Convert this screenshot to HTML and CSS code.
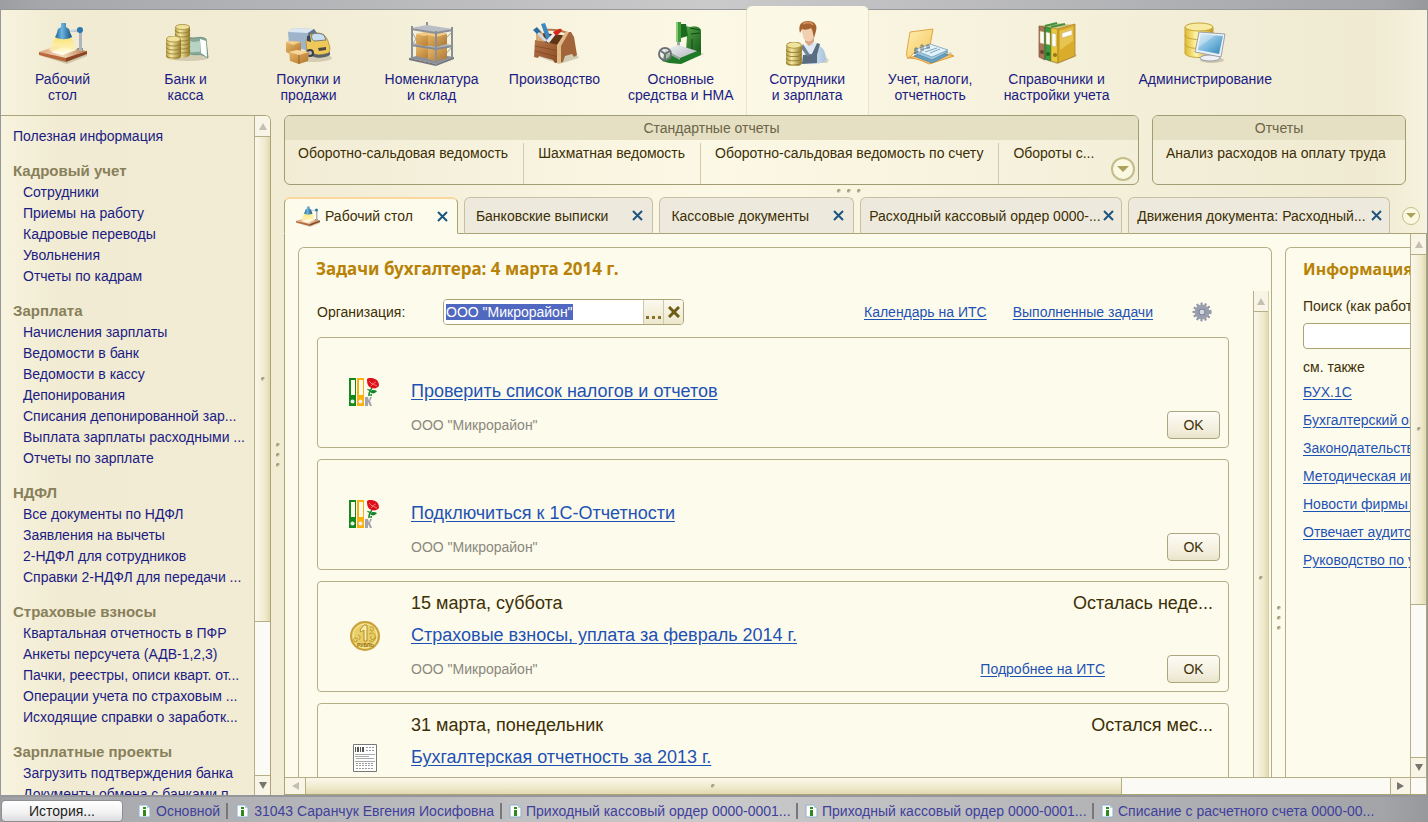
FILE: index.html
```html
<!DOCTYPE html>
<html lang="ru">
<head>
    <meta charset="utf-8">
    <title>Рабочий стол</title>
    <meta name="viewport" content="width=device-width, initial-scale=1">
    <link rel="stylesheet" href="styles.css">
</head>
<body>
    <svg class="defs" width="0" height="0">
        <defs>
            <linearGradient id="gold"><stop offset="0" stop-color="#b39b45"/><stop offset=".35" stop-color="#f6e9a0"/><stop offset="1" stop-color="#937a2a"/></linearGradient>
            <linearGradient id="blue"><stop offset="0" stop-color="#1a5f97"/><stop offset=".4" stop-color="#6db5de"/><stop offset="1" stop-color="#16507f"/></linearGradient>
            <linearGradient id="light" x2="0" y2="1"><stop offset="0" stop-color="#ffdf4a"/><stop offset="1" stop-color="#fffbd9"/></linearGradient>
            <linearGradient id="wood" y2="1"><stop offset="0" stop-color="#b5774c"/><stop offset="1" stop-color="#8a4a24"/></linearGradient>
            <linearGradient id="desk"><stop offset="0" stop-color="#dba27a"/><stop offset=".5" stop-color="#f4dcb8"/><stop offset="1" stop-color="#b9744a"/></linearGradient>
            <linearGradient id="box" y2="1"><stop offset="0" stop-color="#eabb6c"/><stop offset="1" stop-color="#b0742a"/></linearGradient>
            <linearGradient id="green" y2="1"><stop offset="0" stop-color="#5cb04b"/><stop offset="1" stop-color="#14551a"/></linearGradient>
            <linearGradient id="steel" y2="1"><stop offset="0" stop-color="#f4f6f8"/><stop offset="1" stop-color="#b0b4ba"/></linearGradient>
            <linearGradient id="screen" y2="1"><stop offset="0" stop-color="#c9e6f5"/><stop offset=".5" stop-color="#7bb9de"/><stop offset="1" stop-color="#2f86b8"/></linearGradient>
            <linearGradient id="cyl"><stop offset="0" stop-color="#e0b92c"/><stop offset=".4" stop-color="#fff6a8"/><stop offset="1" stop-color="#c2961c"/></linearGradient>
            <linearGradient id="folder" y2="1"><stop offset="0" stop-color="#fff0b4"/><stop offset="1" stop-color="#f3c458"/></linearGradient>
            <linearGradient id="shirt"><stop offset="0" stop-color="#f4f9ff"/><stop offset="1" stop-color="#a9c4dd"/></linearGradient>
        </defs>
        <symbol id="i-lamp" viewBox="0 0 48 46">
            <path d="M3 36l25 8 20-8v-4z" fill="#8a8060" opacity=".35"/>
            <path d="M38 28h6v3h-6z" fill="#8d9299"/>
            <path d="M0 32l17-6 31 5-21 7z" fill="url(#desk)"/>
            <path d="M0 32l27 6v4L0 35z" fill="#b9683c"/>
            <path d="M27 38l21-7v3l-21 8z" fill="#8b4522"/>
            <path d="M12 32l13-5 12 3-14 5z" fill="#fff"/>
            <path d="M17 16h15l5 14-15 4-12-4z" fill="url(#light)" opacity=".75"/>
            <path d="M27 9h14v3H27z" fill="url(#steel)"/>
            <path d="M40 11h3v20h-3z" fill="#aeb4bc"/>
            <circle cx="41" cy="10" r="3" fill="#2c77ab"/>
            <path d="M22 3h5v4l3 2c1 4 2 5 3 8-5 3-12 3-17 0 2-3 2-5 3-8l3-2z" fill="url(#blue)"/>
        </symbol>
        <symbol id="i-coins" viewBox="0 0 16 24">
            <path d="M0 3v17c0 5 15 5 15 0V3z" fill="url(#gold)"/>
            <path d="M0 7c0 4 15 4 15 0M0 11c0 4 15 4 15 0M0 15c0 4 15 4 15 0M0 19c0 4 15 4 15 0" fill="none" stroke="#8d7528" stroke-opacity=".8"/>
            <ellipse cx="7.500" cy="3" rx="7" ry="3" fill="#efe3a0" stroke="#b39a45"/>
        </symbol>
        <symbol id="i-close" viewBox="0 0 11 11"><path d="M1 1l9 9M10 1l-9 9" fill="none" stroke="#1c567f" stroke-width="2"/></symbol>
        <symbol id="i-binders" viewBox="0 0 31 29">
            <path d="M0 0h7v28H0z" fill="#128a1e"/><path d="M2 2h4v15H2z" fill="#fdfbec"/><circle cx="3.500" cy="23.500" r="2" fill="#eee"/>
            <path d="M8 0h7v28H8z" fill="#fbb00c"/><path d="M10 2h4v15h-4z" fill="#fdfbec"/><circle cx="11.500" cy="23.500" r="2" fill="#eee"/>
            <path d="M16 19h3l1 4 1-4h2l-2 4 2 5h-2l-2-4v4h-3z" fill="#a2a2aa"/>
            <path d="M23 9c0 3-4 4-3 9" fill="none" stroke="#12842a" stroke-width="1.500"/>
            <path d="M21 14c2-3 5-2 7-1-2 3-5 3-7 1zM22 14c-3-2-4-2-4-3 3 0 4 1 4 3zM19 17l4-1v2z" fill="#12842a"/>
            <path d="M18 1c3-2 6-1 8 0 3 1 4 4 4 7-2 2-4 3-7 2-4-1-5-4-5-9z" fill="#e0101a"/>
            <path d="M20 3l3 3 4-2M22 8l2-2 4 2" fill="none" stroke="#ff9d9d" stroke-width=".7"/>
        </symbol>
        <symbol id="i-info" viewBox="0 0 13 14"><path d="M1 1h8l3 3v9H1z" fill="#fdfdfd" stroke="#8fb0c9"/><path d="M9 1v3h3z" fill="#b9d3e6"/><path d="M5 3h3v2H5zM5 6h3v6H5z" fill="#2f8a1c"/></symbol>
    </svg>

    <div class="window">
        <nav class="sections">
            <a href="#" class="section">
                <svg width="48" height="46"><use href="#i-lamp"/></svg>
                <span>Рабочий<br>стол</span>
            </a>
            <a href="#" class="section">
                <svg width="48" height="46" viewBox="0 0 48 46">
                    <ellipse cx="26" cy="38" rx="20" ry="3" fill="#8a8060" opacity=".3"/>
                    <path d="M26 17c8 3 11-2 18 2l2 19c-8-6-12-1-20-5z" fill="#86aa95" stroke="#6f9282"/>
                    <path d="M28 21c5 2 7 0 10 0v11c-3-1-6 1-10 0z" fill="#b7d3c3"/>
                    <path d="M38 19l6 2 1 16-6-4z" fill="#fff"/>
                    <path d="M13 7v27c0 5 15 5 15 0V7z" fill="url(#gold)"/>
                    <path d="M13 10c0 4 15 4 15 0M13 14c0 4 15 4 15 0M13 18c0 4 15 4 15 0M13 22c0 4 15 4 15 0M13 26c0 4 15 4 15 0M13 30c0 4 15 4 15 0" fill="none" stroke="#8d7528" stroke-opacity=".8"/>
                    <ellipse cx="20.500" cy="7" rx="7" ry="2.500" fill="#efe3a0" stroke="#b39a45"/>
                    <use href="#i-coins" x="4" y="16" width="16" height="24"/>
                </svg>
                <span>Банк и<br>касса</span>
            </a>
            <a href="#" class="section">
                <svg width="48" height="46" viewBox="0 0 48 46">
                    <ellipse cx="28" cy="38" rx="19" ry="4" fill="#8a8060" opacity=".3"/>
                    <path d="M3 12l5-4 21 1 3 4-9 18-19-6z" fill="#9db4ca"/>
                    <path d="M3 12l5-4 21 1-6 4z" fill="#dde7f1"/><path d="M23 13l6-4 3 4-7 17z" fill="#60758c"/>
                    <path d="M21 21c2-6 5-8 11-8 6 0 9 3 11 8l2 7-1 5-10 2-12-3z" fill="#efc85a" stroke="#a8842c" stroke-width=".7"/>
                    <path d="M27 14c4-1 9-1 12 1l2 5-11 1c-3 0-4-4-3-7z" fill="#c8dff2" stroke="#4c5b68" stroke-width=".7"/>
                    <path d="M22 16l3-1 1 7-4-1z" fill="#34495b"/>
                    <path d="M27 33c5 3 13 2 18-1v3c-5 3-13 4-18 1z" fill="#5b6168"/>
                    <path d="M33 28l8-1v3l-7 1z" fill="#4d4a40"/>
                    <circle cx="25" cy="33" r="4" fill="#3b3f44"/><circle cx="25" cy="33" r="2" fill="#b9bec4"/>
                    <path d="M1 22l5-1 10 1v11l-9 2-6-3z" fill="url(#box)"/><path d="M1 22l5-1 10 1-8 3z" fill="#f3cf90"/>
                    <path d="M4 32l8-2 12 2-1 9-9 3-9-3z" fill="url(#box)"/><path d="M4 32l8-2 12 2-10 3z" fill="#f5d69d"/><path d="M14 35v9" stroke="#99621f"/>
                </svg>
                <span>Покупки и<br>продажи</span>
            </a>
            <a href="#" class="section">
                <svg width="48" height="46" viewBox="0 0 48 46">
                    <path d="M1 38l18-5 27 4-18 7z" fill="#8c9096"/><path d="M1 38l27 6v2L1 40zM28 44l18-7v2l-18 7z" fill="#73777d"/>
                    <path d="M18 2h2v33h-2z" fill="#8b9097"/>
                    <path d="M8 27l10-2 7 2v10l-9 1-8-2z" fill="url(#box)"/><path d="M20 29l11-3 8 2v10l-11 3-8-2z" fill="url(#box)"/>
                    <path d="M3 24l16-3 26 4-17 4z" fill="#b0b4ba"/><path d="M3 24l25 4v2L3 26zM28 28l17-3v2l-17 3z" fill="#858a91"/>
                    <path d="M8 14l10-2 7 2v11l-9 1-8-2z" fill="url(#box)"/><path d="M20 15l11-3 8 2v10l-11 3-8-2z" fill="url(#box)"/>
                    <path d="M8 14l10-2 7 2-9 2zM20 15l11-3 8 2-11 3z" fill="#f3cb85"/>
                    <path d="M3 8l16-3 26 4-17 4z" fill="#b9bec6"/><path d="M3 8l25 4v2L3 10zM28 12l17-3v2l-17 3z" fill="#8b9097"/>
                    <path d="M4 12l4 7-4 6M30 27l13-14M30 43l13-15" fill="none" stroke="#8b9097" stroke-width=".8"/>
                    <path d="M3 6h2v33H3zM27 11h2v34h-2zM43 7h2v31h-2z" fill="#8b9097"/>
                </svg>
                <span>Номенклатура<br>и склад</span>
            </a>
            <a href="#" class="section">
                <svg width="48" height="46" viewBox="0 0 48 46">
                    <path d="M6 36l22 8 20-6-3-5z" fill="#8a8060" opacity=".35"/>
                    <path d="M13 9c9-1 17 0 24 3v2c-8-3-16-4-24-3z" fill="#b87b49"/>
                    <path d="M4 22l7-9 20 2 7 3-9 10z" fill="#5f3518"/>
                    <path d="M5 21V11l3-2 4 4 1 9z" fill="#d9ab78"/>
                    <path d="M10 4l4-1 6 16-4 2z" fill="#3b88c2"/><path d="M2 10l4-3 4 5-3 3z" fill="#2a6c9d"/><path d="M6 14l2-2 8 8-2 2z" fill="#d3dbe2"/><path d="M15 21l8-9 2 2-7 9z" fill="#e8ecef"/>
                    <path d="M22 12l6-3c2-1 4 1 2 3l-5 4z" fill="#d92618"/>
                    <path d="M4 20l24 5v17l-4 1-2-3-14-4-1 2-4-1z" fill="url(#wood)"/>
                    <path d="M4 26l24 5M4 31l24 6" stroke="#7c4420" stroke-width=".7"/>
                    <path d="M28 25l8-13h4l3 5 3 18-3 2-2-3-7 2-2 6-4 1z" fill="#a2653a"/>
                    <path d="M26 25l9-14 3 1-8 14v17h-4z" fill="#e2b989"/>
                </svg>
                <span>Производство</span>
            </a>
            <a href="#" class="section">
                <svg width="48" height="46" viewBox="0 0 48 46">
                    <path d="M12 42l10 2 25-10-4-2z" fill="#8a8060" opacity=".3"/>
                    <path d="M25 5l8 2c5-2 10 0 11 3v23l-8 3-7-5 1-15-5-2z" fill="url(#green)"/>
                    <path d="M33 8l10 2M34 14l9-1M35 19v14" stroke="#0f4a16" fill="none"/>
                    <path d="M19 2h5v20h-5z" fill="#3f9a38"/><path d="M19 2h2v20h-2z" fill="#8acb75"/><path d="M24 4h5l2 12-7 2z" fill="#1a6a20"/>
                    <path d="M20 22h3v6h-3z" fill="#a6a6a6"/>
                    <path d="M8 31l12-5 24 6v3l-20 9-12-1-7-2z" fill="#1e7a26"/>
                    <path d="M8 30l13-5 19 6-17 7z" fill="url(#steel)"/><path d="M8 30l15 8v2L8 32z" fill="#9da3a8"/>
                    <circle cx="8" cy="34" r="6" fill="#eceeed" fill-opacity=".6" stroke="#6d7377" stroke-width="2"/>
                    <path d="M8 34l-4-3M8 34l5-3M8 34v6" stroke="#6d7377" stroke-width="2"/>
                </svg>
                <span>Основные<br>средства и НМА</span>
            </a>
            <a href="#" class="section active">
                <svg width="48" height="46" viewBox="0 0 48 46">
                    <path d="M17 43h27l2-3-4-4z" fill="#8a8060" opacity=".3"/>
                    <path d="M17 43c-1-11 1-18 10-20 9 1 16 4 16 18-7 4-19 4-26 2z" fill="url(#shirt)"/>
                    <path d="M24 22l4 5 5-5 1 5-6 7-5-7z" fill="#dfeaf5"/>
                    <path d="M34 23l3 1-3 11v8l-15 1 1-9 9-1z" fill="#5a6d80"/><path d="M20 24l7 11-3 1-6-8z" fill="#6f8090"/>
                    <path d="M22 17h9v5l-5 4-4-4z" fill="#dca684"/>
                    <path d="M18 7c3-4 12-4 14 0l-1 9c-1 7-9 7-11 1z" fill="#f3cfb2"/>
                    <path d="M17 13c-2-8 1-12 8-12 6 0 10 4 8 10l-2 7c-1-4-1-7-3-10-3 2-7 2-9 1z" fill="#a4622e"/>
                    <path d="M20 4c3-2 8-2 10 1" fill="none" stroke="#cf9059" stroke-width="2"/>
                    <use href="#i-coins" x="3" y="22" width="17" height="25"/>
                </svg>
                <span>Сотрудники<br>и зарплата</span>
            </a>
            <a href="#" class="section">
                <svg width="48" height="46" viewBox="0 0 48 46">
                    <path d="M20 43l27-8-2-3z" fill="#8a8060" opacity=".35"/>
                    <path d="M1 38c9 0 14 2 22 6l25-8-16-4z" fill="#f9c777" stroke="#e09c35"/>
                    <path d="M4 12l23-3-4 22-15 2-4 4c-3 2-4-1-3-7z" fill="url(#folder)" stroke="#e0a446"/>
                    <path d="M8 36l16-6 18 5-16 8z" fill="#6ba2c4" stroke="#427b9e" stroke-width=".7"/>
                    <path d="M8 33l16-6 18 5-16 8z" fill="#9ec8df" stroke="#427b9e" stroke-width=".7"/>
                    <path d="M8 30l16-6 18 6-16 7z" fill="#e5f1f8" stroke="#6398b7" stroke-width=".7"/>
                    <path d="M15 30l9-3M19 32l12-4M24 33l10-4" stroke="#7ba9c4"/>
                    <path d="M9 34v-6h2v5M15 32v-7h2v6M21 29v-4h2v4" fill="none" stroke="#5f6468" stroke-width=".8"/>
                </svg>
                <span>Учет, налоги,<br>отчетность</span>
            </a>
            <a href="#" class="section">
                <svg width="48" height="46" viewBox="0 0 48 46">
                    <path d="M12 40l12 4 20-8-3-4z" fill="#8a8060" opacity=".4"/>
                    <path d="M6 6l16-3 20 2-18 4z" fill="#d9c685"/>
                    <path d="M6 6l6 1v33l-6-3z" fill="#a87454" stroke="#805034" stroke-width=".7"/><path d="M12 7l6 1v33l-6-2z" fill="#3c9a40" stroke="#1d6d25" stroke-width=".7"/>
                    <path d="M12 6l12-3M18 7l14-3" stroke="#419144" stroke-width="2"/>
                    <path d="M18 8l7 1v34l-7-2z" fill="#e9c63c" stroke="#a8861f" stroke-width=".7"/>
                    <path d="M25 9l17-5v32l-17 7z" fill="#d9ac2c" stroke="#a1791b" stroke-width=".7"/><path d="M27 11l13-4v14l-13 9z" fill="#f0d268" opacity=".6"/>
                    <path d="M7 11l4 1v12l-4-1zM13 12l4 1v12l-4-1zM19 13l4 1v13l-4-1zM29 13l10-3v5l-10 3z" fill="#fffef5" stroke="#b8a773" stroke-width=".5"/>
                    <circle cx="9" cy="32" r="2" fill="#6a4630"/><circle cx="15" cy="34" r="2" fill="#1c641f"/><circle cx="22" cy="35" r="2" fill="#937819"/>
                </svg>
                <span>Справочники и<br>настройки учета</span>
            </a>
            <a href="#" class="section">
                <svg width="48" height="46" viewBox="0 0 48 46">
                    <ellipse cx="31" cy="40" rx="12" ry="3" fill="#8a8060" opacity=".35"/>
                    <path d="M4 7v26c0 6 28 6 28 0V7z" fill="url(#cyl)" stroke="#c7a538"/>
                    <path d="M4 15c0 6 28 6 28 0M4 24c0 6 28 6 28 0" fill="none" stroke="#c7a538"/>
                    <ellipse cx="18" cy="7" rx="14" ry="4" fill="#f8eaa0" stroke="#c7a538"/>
                    <path d="M26 33l6 1v4l-7-1z" fill="#9fa7b0"/><ellipse cx="29" cy="38" rx="10" ry="3" fill="#eef0f3" stroke="#9aa0a8"/>
                    <path d="M18 12l26 2-4 23-26-5z" fill="#edf0f4" stroke="#9aa2ac"/>
                    <path d="M20 14l22 2-4 18-21-4z" fill="url(#screen)"/><path d="M20 14l15 1-17 12z" fill="#fff" opacity=".3"/>
                </svg>
                <span>Администрирование</span>
            </a>
        </nav>

        <div class="workspace">
            <aside class="sidebar">
                <div class="nav">
                    <a href="#" class="nav-main">Полезная информация</a>
                    <h2>Кадровый учет</h2>
                    <a href="#">Сотрудники</a>
                    <a href="#">Приемы на работу</a>
                    <a href="#">Кадровые переводы</a>
                    <a href="#">Увольнения</a>
                    <a href="#">Отчеты по кадрам</a>
                    <h2>Зарплата</h2>
                    <a href="#">Начисления зарплаты</a>
                    <a href="#">Ведомости в банк</a>
                    <a href="#">Ведомости в кассу</a>
                    <a href="#">Депонирования</a>
                    <a href="#">Списания депонированной зар...</a>
                    <a href="#">Выплата зарплаты расходными ...</a>
                    <a href="#">Отчеты по зарплате</a>
                    <h2>НДФЛ</h2>
                    <a href="#">Все документы по НДФЛ</a>
                    <a href="#">Заявления на вычеты</a>
                    <a href="#">2-НДФЛ для сотрудников</a>
                    <a href="#">Справки 2-НДФЛ для передачи ...</a>
                    <h2>Страховые взносы</h2>
                    <a href="#">Квартальная отчетность в ПФР</a>
                    <a href="#">Анкеты персучета (АДВ-1,2,3)</a>
                    <a href="#">Пачки, реестры, описи кварт. от...</a>
                    <a href="#">Операции учета по страховым ...</a>
                    <a href="#">Исходящие справки о заработк...</a>
                    <h2>Зарплатные проекты</h2>
                    <a href="#">Загрузить подтверждения банка</a>
                    <a href="#">Документы обмена с банками п...</a>
                </div>
                <div class="scroll-v">
                    <button class="arrow up off" aria-label="Вверх"></button>
                    <div class="thumb nav-thumb"><i class="dot"></i></div>
                    <div class="track"></div>
                    <button class="arrow down" aria-label="Вниз"></button>
                </div>
            </aside>
            <div class="splitter"><i class="dot"></i><i class="dot"></i><i class="dot"></i></div>

            <main class="main">
                <div class="commands">
                    <section class="group group-wide">
                        <h3>Стандартные отчеты</h3>
                        <div class="group-items">
                            <a href="#">Оборотно-сальдовая ведомость</a>
                            <a href="#">Шахматная ведомость</a>
                            <a href="#">Оборотно-сальдовая ведомость по счету</a>
                            <a href="#">Обороты с...</a>
                        </div>
                        <button class="round group-more" aria-label="Еще"></button>
                    </section>
                    <section class="group group-side">
                        <h3>Отчеты</h3>
                        <div class="group-items">
                            <a href="#">Анализ расходов на оплату труда</a>
                        </div>
                    </section>
                </div>
                <div class="splitter splitter-h"><i class="dot"></i><i class="dot"></i><i class="dot"></i></div>

                <div class="tabs">
                    <div class="tab current"><svg width="24" height="23"><use href="#i-lamp"/></svg><a href="#">Рабочий стол</a><button aria-label="Закрыть"><svg width="11" height="11"><use href="#i-close"/></svg></button></div>
                    <div class="tab"><a href="#">Банковские выписки</a><button aria-label="Закрыть"><svg width="11" height="11"><use href="#i-close"/></svg></button></div>
                    <div class="tab"><a href="#">Кассовые документы</a><button aria-label="Закрыть"><svg width="11" height="11"><use href="#i-close"/></svg></button></div>
                    <div class="tab long"><a href="#">Расходный кассовый ордер 0000-...</a><button aria-label="Закрыть"><svg width="11" height="11"><use href="#i-close"/></svg></button></div>
                    <div class="tab long"><a href="#">Движения документа: Расходный...</a><button aria-label="Закрыть"><svg width="11" height="11"><use href="#i-close"/></svg></button></div>
                    <div class="tabs-end"><button class="round small" aria-label="Все вкладки"></button></div>
                </div>

                <div class="page">
                    <div class="page-row">
                        <div class="panels">
                            <section class="panel tasks">
                                <h1>Задачи бухгалтера: 4 марта 2014 г.</h1>
                                <div class="tasks-body">
                                    <div class="tasks-main">
                                        <div class="filter">
                                            <label for="org">Организация:</label>
                                            <div class="field">
                                                <input type="text" id="org" value='ООО "Микрорайон"'>
                                                <button aria-label="Выбрать"><svg width="15" height="15" viewBox="0 0 15 15"><path d="M0 11h3v3H0zM6 11h3v3H6zM12 11h3v3h-3z" fill="#85742a"/></svg></button>
                                                <button aria-label="Очистить"><svg width="12" height="12" viewBox="0 0 12 12"><path d="M1 1l10 10M11 1l-10 10" stroke="#6e5d14" stroke-width="3"/></svg></button>
                                            </div>
                                            <a href="#" class="link calendar">Календарь на ИТС</a>
                                            <a href="#" class="link">Выполненные задачи</a>
                                            <button class="gear" aria-label="Настройка">
                                                <svg width="20" height="20" viewBox="0 0 20 20">
                                                    <circle cx="10" cy="10" r="8" fill="none" stroke="#9095a6" stroke-width="3" stroke-dasharray="2 2"/>
                                                    <circle cx="10" cy="10" r="5" fill="none" stroke="#9a9fb0" stroke-width="5"/>
                                                    <circle cx="10" cy="10" r="3" fill="#d5d8df" stroke="#777d90"/>
                                                </svg>
                                            </button>
                                        </div>
                                        <div class="cards">
                                            <article class="card">
                                                <svg class="pic" width="31" height="29"><use href="#i-binders"/></svg>
                                                <a href="#" class="link title">Проверить список налогов и отчетов</a>
                                                <span class="org">ООО "Микрорайон"</span>
                                                <button class="btn">OK</button>
                                            </article>
                                            <article class="card">
                                                <svg class="pic" width="31" height="29"><use href="#i-binders"/></svg>
                                                <a href="#" class="link title">Подключиться к 1С-Отчетности</a>
                                                <span class="org">ООО "Микрорайон"</span>
                                                <button class="btn">OK</button>
                                            </article>
                                            <article class="card">
                                                <span class="date">15 марта, суббота</span>
                                                <span class="left">Осталась неде...</span>
                                                <svg class="pic" width="32" height="32" viewBox="0 0 32 32">
                                                    <circle cx="16" cy="16" r="14" fill="#e9cf68" stroke="#c9a03a" stroke-width="2"/><circle cx="16" cy="16" r="12" fill="none" stroke="#f7e9a2"/>
                                                    <path d="M11 10l4-5h3v16h-3V10l-3 2z" fill="#f9edb0" stroke="#b58c2a"/>
                                                    <path d="M21 7c4-1 5 3 2 4-2 0-2-2-1-2M20 14c5-3 8 2 5 5-3 2-5-2-2-3M9 19c-4-3-6 1-3 3 2 0 3-2 1-2M20 20c2 3 6 1 7-3M9 15c2 0 3 3 1 5" fill="none" stroke="#bd952f"/>
                                                    <text x="8" y="27" class="coin-text">РУБЛЬ</text>
                                                </svg>
                                                <a href="#" class="link title">Страховые взносы, уплата за февраль 2014 г.</a>
                                                <span class="org">ООО "Микрорайон"</span>
                                                <a href="#" class="link more">Подробнее на ИТС</a>
                                                <button class="btn">OK</button>
                                            </article>
                                            <article class="card">
                                                <span class="date">31 марта, понедельник</span>
                                                <span class="left">Остался мес...</span>
                                                <svg class="pic" width="24" height="28" viewBox="0 0 24 28">
                                                    <path d="M.5.500h23v27H.5z" fill="#fff" stroke="#777"/>
                                                    <path d="M2 3h1v5H2zM4 3h2v5H4zM7 3h1v5H7zM9 3h2v5H9z" fill="#555"/>
                                                    <path d="M13 3.500h9M13 6.500h9M3 19.500h18M3 21.500h18M3 24.500h18" stroke="#999" stroke-dasharray="2 1"/>
                                                    <path d="M2 10.500h20M2 12.500h14M3 14.500h18M2 17.500h20" stroke="#aaa"/>
                                                </svg>
                                                <a href="#" class="link title">Бухгалтерская отчетность за 2013 г.</a>
                                                <span class="org">ООО "Микрорайон"</span>
                                                <button class="btn">OK</button>
                                            </article>
                                        </div>
                                    </div>
                                    <div class="scroll-v inner">
                                        <button class="arrow up off" aria-label="Вверх"></button>
                                        <div class="thumb fill"><i class="dot"></i></div>
                                    </div>
                                </div>
                            </section>
                            <div class="splitter panel-splitter"><i class="dot"></i><i class="dot"></i><i class="dot"></i></div>
                            <section class="panel info">
                                <h1>Информация</h1>
                                <label for="search">Поиск (как работать)</label>
                                <input type="text" id="search">
                                <p>см. также</p>
                                <a href="#" class="link">БУХ.1С</a>
                                <a href="#" class="link">Бухгалтерский онлайн</a>
                                <a href="#" class="link">Законодательство</a>
                                <a href="#" class="link">Методическая информация</a>
                                <a href="#" class="link">Новости фирмы 1С</a>
                                <a href="#" class="link">Отвечает аудитор</a>
                                <a href="#" class="link">Руководство по учету</a>
                            </section>
                        </div>
                        <div class="scroll-v page-scroll">
                            <button class="arrow up off" aria-label="Вверх"></button>
                            <div class="thumb page-thumb"><i class="dot"></i></div>
                            <div class="track"></div>
                            <button class="arrow down" aria-label="Вниз"></button>
                        </div>
                    </div>
                    <div class="scroll-h">
                        <button class="arrow prev off" aria-label="Влево"></button>
                        <div class="thumb"><i class="dot"></i></div>
                        <div class="track"></div>
                        <button class="arrow next" aria-label="Вправо"></button>
                        <div class="corner"></div>
                    </div>
                </div>
            </main>
        </div>
    </div>

    <footer class="history">
        <button class="history-btn">История...</button>
        <a href="#"><svg width="13" height="14"><use href="#i-info"/></svg>Основной</a>
        <a href="#"><svg width="13" height="14"><use href="#i-info"/></svg>31043 Саранчук Евгения Иосифовна</a>
        <a href="#" class="wide"><svg width="13" height="14"><use href="#i-info"/></svg>Приходный кассовый ордер 0000-0001...</a>
        <a href="#" class="wide"><svg width="13" height="14"><use href="#i-info"/></svg>Приходный кассовый ордер 0000-0001...</a>
        <a href="#" class="wide"><svg width="13" height="14"><use href="#i-info"/></svg>Списание с расчетного счета 0000-00...</a>
    </footer>
    <script>
        document.getElementById('org').select();
    </script>
</body>
</html>
```
FILE: styles.css
```css
* {
    box-sizing: border-box;
}
body {
    margin: 0;
    height: 100vh;
    overflow: hidden;
    display: flex;
    flex-direction: column;
    padding-top: 9px;
    background: linear-gradient(90deg, #9d9ea2, #a6a7ab 3%, #cacacb 50%, #a3a4a8 97%, #97989c);
    font: 14px/16px "Liberation Sans", Arial, sans-serif;
    color: #3d2f05;
}
h1, h2, h3, p {
    margin: 0;
}
a {
    color: inherit;
    text-decoration: none;
}
button {
    font: inherit;
    color: inherit;
    padding: 0;
    border: 0;
    background: none;
}
svg {
    flex: none;
}
.defs {
    position: absolute;
}
.link {
    color: #1d52b5;
    text-decoration: underline;
    text-underline-offset: 2px;
}

.window {
    flex: 1;
    min-height: 0;
    display: flex;
    flex-direction: column;
    border: 1px solid #96979a;
    border-bottom-width: 2px;
    background: linear-gradient(90deg, #f8f3de, #f1ebd3 4%, #f2ecd5 20%, #fbf8e5 50%, #f2edd6 85%, #f0ead2 96%, #f7f2dd);
}

/* sections */
.sections {
    display: flex;
    height: 105px;
    flex: none;
    color: #1b1b84;
}
.section {
    min-width: 123px;
    padding: 10px 11px 0;
    text-align: center;
    border: 1px solid transparent;
    border-width: 0 1px;
}
.section:last-child {
    padding: 10px 16px 0;
}
.section svg,
.section span {
    display: block;
    margin: 0 auto;
}
.section span {
    margin-top: 5px;
    white-space: nowrap;
}
.section.active {
    margin-top: -4px;
    padding-top: 14px;
    border-color: #e8e3ca;
    border-radius: 6px 6px 0 0;
    background: #fbf8e6;
}

/* sidebar */
.workspace {
    flex: 1;
    min-height: 0;
    display: flex;
}
.sidebar {
    width: 270px;
    flex: none;
    display: flex;
    overflow: hidden;
    border: 1px solid #aaa47a;
    border-width: 1px 1px 0 0;
    border-radius: 0 6px 0 0;
}
.nav {
    flex: 1;
    min-width: 0;
    overflow: hidden;
    padding: 10px 0 0 12px;
    line-height: 21px;
    color: #1b1b84;
    white-space: nowrap;
}
.nav a {
    display: block;
    padding-left: 10px;
}
.nav .nav-main {
    padding-left: 0;
}
.nav h2 {
    margin-top: 14px;
    padding-bottom: 2px;
    font-size: 15px;
    line-height: 19px;
    color: #88805a;
}

/* scrollbars */
.scroll-v {
    width: 16px;
    flex: none;
    display: flex;
    flex-direction: column;
    border-left: 1px solid #b5af88;
    background: #fbfaf5;
}
.arrow {
    flex: none;
    display: flex;
    align-items: center;
    justify-content: center;
    background: #f8f5e6;
}
.scroll-v .arrow {
    height: 20px;
}
.arrow::before {
    content: "";
    border: 4px solid transparent;
}
.up::before {
    border-bottom: 7px solid #77766e;
    border-top: 0;
}
.down::before {
    border-top: 7px solid #77766e;
    border-bottom: 0;
}
.prev::before {
    border-right: 7px solid #77766e;
    border-left: 0;
}
.next::before {
    border-left: 7px solid #77766e;
    border-right: 0;
}
.up.off::before {
    border-bottom-color: #c3c0b2;
}
.prev.off::before {
    border-right-color: #c3c0b2;
}
.thumb {
    display: flex;
    align-items: center;
    justify-content: center;
    border: 1px solid #b5af88;
}
.scroll-v .thumb {
    border-width: 1px 0;
    background: linear-gradient(90deg, #faf8ec, #efe9cb 70%, #e0d9b0);
}
.nav-thumb {
    flex: 486;
}
.nav-thumb + .track {
    flex: 153;
}
.page-thumb {
    flex: 350;
}
.page-thumb + .track {
    flex: 153;
}
.scroll-v .down {
    border-top: 1px solid #b5af88;
}
.thumb.fill {
    flex: 1;
    border-bottom: 0;
}
.inner .thumb {
    padding-top: 66px;
}
.dot {
    width: 4px;
    height: 4px;
    border-radius: 2px;
    background: linear-gradient(135deg, #9c9775 40%, #f1edd8 80%);
}
.splitter {
    width: 13px;
    flex: none;
    display: flex;
    flex-direction: column;
    align-items: center;
    justify-content: center;
    gap: 6px;
}
.splitter-h {
    width: auto;
    height: 12px;
    flex-direction: row;
    margin-right: 14px;
}
/* the dots sit at the middle of the whole panel, which continues below the fold */
.panel-splitter {
    padding-top: 212px;
}

/* report commands */
.main {
    flex: 1;
    min-width: 0;
    display: flex;
    flex-direction: column;
}
.commands {
    display: flex;
    gap: 13px;
    padding-right: 21px;
}
.group {
    position: relative;
    height: 70px;
    overflow: hidden;
    border: 1px solid #a29c74;
    border-radius: 6px;
    white-space: nowrap;
}
.group-wide {
    flex: 1;
    min-width: 0;
}
.group-side {
    width: 254px;
    flex: none;
}
.group h3 {
    height: 24px;
    line-height: 24px;
    font-size: 14px;
    font-weight: normal;
    text-align: center;
    color: #6c6548;
    background: #e5dfc3;
}
.group-items {
    display: flex;
    height: 41px;
    margin-top: 3px;
}
.group-items a {
    padding: 2px 15px 0 14px;
    border-right: 1px solid #d2ccac;
}
.group-items a:first-child {
    padding-left: 13px;
}
.group-items a:last-child {
    border: 0;
}
.round {
    width: 24px;
    height: 24px;
    display: flex;
    align-items: center;
    justify-content: center;
    border: 2px solid #c4bd8b;
    border-radius: 50%;
    background: #fbf8e2;
}
.round::before {
    content: "";
    border: 6px solid transparent;
    border-top: 6px solid #aba25c;
    border-bottom: 0;
}
.round.small {
    width: 18px;
    height: 18px;
    border-width: 1px;
}
.round.small::before {
    border-width: 5px 5px 0;
}
.group-more {
    position: absolute;
    right: 3px;
    bottom: 3px;
}

/* tabs */
.tabs {
    display: flex;
    gap: 6px;
    height: 37px;
    flex: none;
    white-space: nowrap;
    position: relative;
    z-index: 1;
    margin-bottom: -1px;
}
.tab {
    display: flex;
    align-items: center;
    padding: 0 9px 0 11px;
    border: 1px solid #c6c1a4;
    border-bottom-color: #a9a376;
    border-radius: 6px 6px 0 0;
    background: #edeadd;
}
.tab button {
    display: flex;
    margin-left: 24px;
}
.tab.current {
    border-color: #a9a376;
    border-top: 2px solid #fad79c;
    border-bottom-color: #fdfbec;
    background: #fdfbec;
}
.tab.current a {
    margin-left: 5px;
}
.tab.long {
    width: 262px;
    justify-content: space-between;
    padding: 0 7px 0 8px;
}
.tab.long button {
    margin-left: 0;
}
.tabs-end {
    flex: 1;
    display: flex;
    align-items: center;
    justify-content: flex-end;
    padding-right: 7px;
}

/* page */
.page {
    flex: 1;
    min-height: 0;
    display: flex;
    flex-direction: column;
    border: 1px solid #a9a376;
    border-right: 0;
    background: #fdfbec;
}
.page-row {
    flex: 1;
    min-height: 0;
    display: flex;
}
.panels {
    flex: 1;
    min-width: 0;
    display: flex;
    overflow: hidden;
    padding: 13px 0 0 13px;
}
.panel {
    border: 1px solid #b5af88;
    border-bottom: 0;
    border-radius: 6px 6px 0 0;
}
.panel h1 {
    font: bold 17px/20px "Noto Sans", Tahoma, sans-serif;
    color: #b88207;
    white-space: nowrap;
}
.tasks {
    flex: 1;
    min-width: 0;
    display: flex;
    flex-direction: column;
    padding: 11px 2px 0 17px;
}
.tasks-body {
    flex: 1;
    min-height: 0;
    display: flex;
    gap: 24px;
    margin-top: 12px;
}
.tasks-main {
    flex: 1;
    min-width: 0;
    overflow: hidden;
    padding: 8px 0 0 1px;
}
.filter {
    display: flex;
    align-items: center;
    height: 26px;
}
.filter label {
    width: 126px;
}
.field {
    display: flex;
    width: 241px;
    height: 26px;
    border: 1px solid #a9a376;
    border-radius: 4px;
    overflow: hidden;
    background: #fff;
}
.field input {
    flex: 1;
    min-width: 0;
    padding: 0 2px;
    border: 0;
    outline: 0;
    font: inherit;
}
.field input::selection {
    color: #fff;
    background: #5068c0;
}
.field button {
    width: 20px;
    display: flex;
    align-items: center;
    justify-content: center;
    border-left: 1px solid #cfc9a6;
    background: linear-gradient(#fbf9ee, #ece7cd);
}
.calendar {
    margin: 0 26px 0 auto;
}
.gear {
    display: flex;
    margin: 0 17px 0 39px;
}
.inner {
    border-right: 1px solid #d6d0ad;
}

.cards {
    display: grid;
    gap: 11px;
    margin-top: 12px;
}
.card {
    display: grid;
    grid-template-columns: 93px auto 1fr auto;
    grid-template-rows: 24px 40px 28px;
    align-items: center;
    padding: 9px 8px 8px 0;
    border: 1px solid #b5af88;
    border-radius: 4px;
    white-space: nowrap;
}
.date,
.left,
.title {
    font-size: 18px;
    line-height: 20px;
}
.date {
    grid-area: 1 / 2 / 2 / 4;
}
.left {
    grid-area: 1 / 3 / 2 / 5;
    justify-self: end;
    padding-right: 7px;
}
.pic {
    grid-area: 2 / 1;
    justify-self: center;
    margin-top: 2px;
}
.title {
    grid-area: 2 / 2 / 3 / 5;
    justify-self: start;
}
.org {
    grid-area: 3 / 2;
    color: #8a887c;
}
.more {
    grid-area: 3 / 3;
    justify-self: end;
    margin-right: 62px;
}
.btn {
    grid-area: 3 / 4;
    width: 53px;
    height: 28px;
    border: 1px solid #aca67e;
    border-radius: 4px;
    background: linear-gradient(#fdfcf5, #f2eedc 70%, #e9e4ca);
}
.coin-text {
    font-size: 5px;
    font-weight: bold;
    fill: #98701a;
}

.info {
    width: 125px;
    flex: none;
    display: flex;
    flex-direction: column;
    overflow: hidden;
    padding: 11px 0 0 17px;
    border-right: 0;
    border-radius: 6px 0 0 0;
    white-space: nowrap;
}
.info h1 {
    font-size: 16px;
}
.info label {
    margin-top: 19px;
}
.info input {
    width: 200px;
    height: 26px;
    flex: none;
    margin-top: 9px;
    border: 1px solid #a9a376;
    border-radius: 4px;
    background: #fff;
}
.info p {
    margin: 10px 0 3px;
}
.info .link {
    line-height: 28px;
}

.page-scroll {
    width: 17px;
    border-right: 1px solid #a9a376;
}
.scroll-h {
    height: 17px;
    flex: none;
    display: flex;
    border-top: 1px solid #b5af88;
    background: #fbfaf5;
}
.scroll-h .arrow {
    width: 20px;
}
.scroll-h .thumb {
    flex: 816;
    border-width: 0 1px;
    background: linear-gradient(#faf8ec, #efe9cb 60%, #e0d9b0);
}
.scroll-h .track {
    flex: 269;
}
.scroll-h .next {
    border-left: 1px solid #b5af88;
}
.corner {
    width: 17px;
    border: 1px solid #b5af88;
    border-width: 0 1px;
}

/* history bar */
.history {
    height: 25px;
    flex: none;
    display: flex;
    align-items: center;
    padding-top: 2px;
    white-space: nowrap;
    color: #40409c;
}
.history-btn {
    width: 122px;
    height: 22px;
    margin: 0 7px 0 1px;
    border: 1px solid #8d8e91;
    border-radius: 4px;
    background: linear-gradient(#fff, #f1f1f2 60%, #dcdcde);
    color: #222;
}
.history a {
    display: flex;
    align-items: center;
    gap: 5px;
    padding: 0 6px 0 8px;
    border-right: 2px solid #77787c;
}
.history a:last-child {
    border: 0;
}
.history .wide {
    width: 296px;
    gap: 4px;
    padding-left: 7px;
}
```
